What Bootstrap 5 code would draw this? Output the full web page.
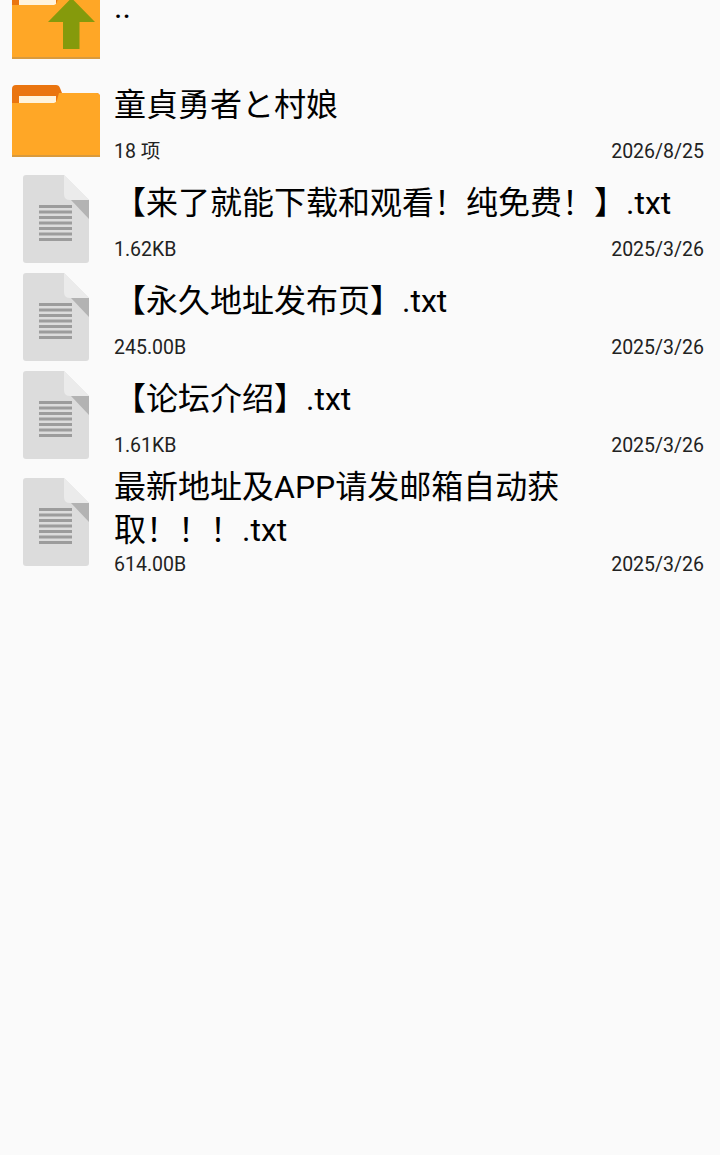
<!DOCTYPE html>
<html lang="zh-CN">
<head>
    <meta charset="UTF-8">
    <meta name="viewport" content="width=device-width, initial-scale=1.0">
    <title>文件列表</title>
    <link href="https://cdn.jsdelivr.net/npm/bootstrap@5.3.0/dist/css/bootstrap.min.css" rel="stylesheet">
    <style>
        body {
            background-color: #fafafa;
            color: #000;
            font-family: Roboto, "Noto Sans CJK SC", sans-serif;
            height: 1155px;
            overflow: hidden;
        }
        .file-list {
            margin-top: -22px;
        }
        .file-row {
            height: 98px;
        }
        .file-row-tall {
            height: 110px;
        }
        .file-icon-box {
            width: 114px;
            flex: 0 0 114px;
        }
        .folder-svg {
            width: 88px;
            height: 72px;
            margin-left: 12px;
            margin-top: 9px;
        }
        .doc-svg {
            width: 66px;
            height: 88px;
            margin-left: 23px;
            margin-top: 1px;
        }
        .doc-svg-tall {
            margin-top: 10px;
        }
        .file-text {
            padding-right: 16px;
            min-width: 0;
        }
        .file-name {
            font-size: 32px;
            line-height: 43px;
            padding-top: 8px;
            height: 62px;
            text-spacing-trim: space-all;
        }
        .file-row-tall .file-name {
            padding-top: 0;
            margin-top: -2px;
            height: 86px;
            width: 476px;
        }
        .file-meta {
            font-size: 19.5px;
            line-height: 24px;
            color: #222;
            margin-top: 2px;
        }
        .file-row-tall .file-meta {
            margin-top: 1px;
        }
    </style>
</head>
<body>
    <div class="file-list">
        <!-- Parent folder -->
        <div class="d-flex file-row">
            <div class="file-icon-box">
                <svg class="folder-svg d-block" viewBox="0 0 88 72">
                    <path d="M4 0H44Q47 0 48 3L50 8H84Q88 8 88 12V72H0V4Q0 0 4 0Z" fill="#ea7510"/>
                    <rect x="7" y="11" width="37" height="7" fill="#fff3dc"/>
                    <path d="M0 18H42Q44 18 45 15L47 8H84Q88 8 88 12V72H0Z" fill="#ffa726"/>
                    <rect y="70" width="88" height="2" fill="#d99a3c"/>
                    <path d="M36 35 59.500 11 83 35H67.500V62H51V35Z" fill="#859a0c"/>
                </svg>
            </div>
            <div class="flex-grow-1 file-text">
                <div class="file-name">..</div>
            </div>
        </div>

        <!-- Folder -->
        <div class="d-flex file-row">
            <div class="file-icon-box">
                <svg class="folder-svg d-block" viewBox="0 0 88 72">
                    <path d="M4 0H44Q47 0 48 3L50 8H84Q88 8 88 12V72H0V4Q0 0 4 0Z" fill="#ea7510"/>
                    <rect x="7" y="11" width="37" height="7" fill="#fff3dc"/>
                    <path d="M0 18H42Q44 18 45 15L47 8H84Q88 8 88 12V72H0Z" fill="#ffa726"/>
                    <rect y="70" width="88" height="2" fill="#d99a3c"/>
                </svg>
            </div>
            <div class="flex-grow-1 file-text">
                <div class="file-name">童貞勇者と村娘</div>
                <div class="d-flex justify-content-between file-meta"><span>18 项</span><span>2026/8/25</span></div>
            </div>
        </div>

        <div class="d-flex file-row">
            <div class="file-icon-box">
                <svg class="doc-svg d-block" viewBox="0 0 66 88">
                    <use href="#doc"/>
                </svg>
            </div>
            <div class="flex-grow-1 file-text">
                <div class="file-name">【来了就能下载和观看！纯免费！】.txt</div>
                <div class="d-flex justify-content-between file-meta"><span>1.62KB</span><span>2025/3/26</span></div>
            </div>
        </div>

        <div class="d-flex file-row">
            <div class="file-icon-box">
                <svg class="doc-svg d-block" viewBox="0 0 66 88">
                    <use href="#doc"/>
                </svg>
            </div>
            <div class="flex-grow-1 file-text">
                <div class="file-name">【永久地址发布页】.txt</div>
                <div class="d-flex justify-content-between file-meta"><span>245.00B</span><span>2025/3/26</span></div>
            </div>
        </div>

        <div class="d-flex file-row">
            <div class="file-icon-box">
                <svg class="doc-svg d-block" viewBox="0 0 66 88">
                    <use href="#doc"/>
                </svg>
            </div>
            <div class="flex-grow-1 file-text">
                <div class="file-name">【论坛介绍】.txt</div>
                <div class="d-flex justify-content-between file-meta"><span>1.61KB</span><span>2025/3/26</span></div>
            </div>
        </div>

        <div class="d-flex file-row-tall">
            <div class="file-icon-box">
                <svg class="doc-svg doc-svg-tall d-block" viewBox="0 0 66 88">
                    <use href="#doc"/>
                </svg>
            </div>
            <div class="flex-grow-1 file-text">
                <div class="file-name">最新地址及APP请发邮箱自动获取！！！.txt</div>
                <div class="d-flex justify-content-between file-meta"><span>614.00B</span><span>2025/3/26</span></div>
            </div>
        </div>
    </div>

    <!-- Shared document icon -->
    <svg width="0" height="0" class="d-block">
        <defs>
            <g id="doc">
                <path d="M3 0H41L66 25V85Q66 88 63 88H3Q0 88 0 85V3Q0 0 3 0Z" fill="#dcdcdc"/>
                <path d="M41 0L66 25H47Q41 25 41 19Z" fill="#ebebeb"/>
                <path d="M48 25H66V44Z" fill="#b3b3b3"/>
                <g fill="#9c9c9c">
                    <rect x="16" y="30" width="33" height="3"/>
                    <rect x="16" y="35.500" width="33" height="3"/>
                    <rect x="16" y="41" width="33" height="3"/>
                    <rect x="16" y="46.500" width="33" height="3"/>
                    <rect x="16" y="52" width="33" height="3"/>
                    <rect x="16" y="57.500" width="33" height="3"/>
                    <rect x="16" y="63" width="33" height="3"/>
                </g>
            </g>
        </defs>
    </svg>

    <script src="https://cdn.jsdelivr.net/npm/bootstrap@5.3.0/dist/js/bootstrap.bundle.min.js"></script>
</body>
</html>
